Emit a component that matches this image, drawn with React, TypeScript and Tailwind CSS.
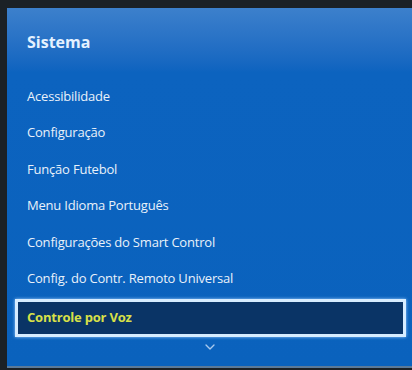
import { ChevronDown } from 'lucide-react';

const items = [
  'Acessibilidade',
  'Configuração',
  'Função Futebol',
  'Menu Idioma Português',
  'Configurações do Smart Control',
  'Config. do Contr. Remoto Universal',
];

export default function App() {
  return (
    <div className="w-[412px] h-[370px] bg-[#1b2126] pl-[7px] pt-[8px] overflow-hidden" style={{ fontFamily: '"Open Sans", "Liberation Sans", sans-serif' }}>
      <div className="h-[360px] flex flex-col bg-gradient-to-b from-[#3c80cc] via-[#0c63bf] via-[18%] to-[#0a62bd] border-b-2 border-[#5b7a99]">
        <div className="h-[70px] pl-[20px] pt-[26px] text-[16px] font-bold text-[#e4f1ff] leading-none">Sistema</div>
        <div className="flex flex-col">
          {items.map((it) => (
            <div key={it} className="h-[36.5px] pl-[20px] flex items-center text-[13px] text-[#e9f1fa] tracking-[-0.2px]">
              {it}
            </div>
          ))}
        </div>
        <div className="mt-[2px] ml-[8px] mr-[6px] h-[38px] border-[3px] border-[#d6ecff] bg-[#0a3466] shadow-[0_0_3px_#9fd0ff] flex items-center pl-[9px] text-[13px] font-bold text-[#d8e048] tracking-[-0.2px]">
          Controle por Voz
        </div>
        <div className="flex justify-center mt-[2px]">
          <ChevronDown className="w-[16px] h-[16px] text-[#a9c9ee]" strokeWidth={2} />
        </div>
      </div>
    </div>
  );
}
